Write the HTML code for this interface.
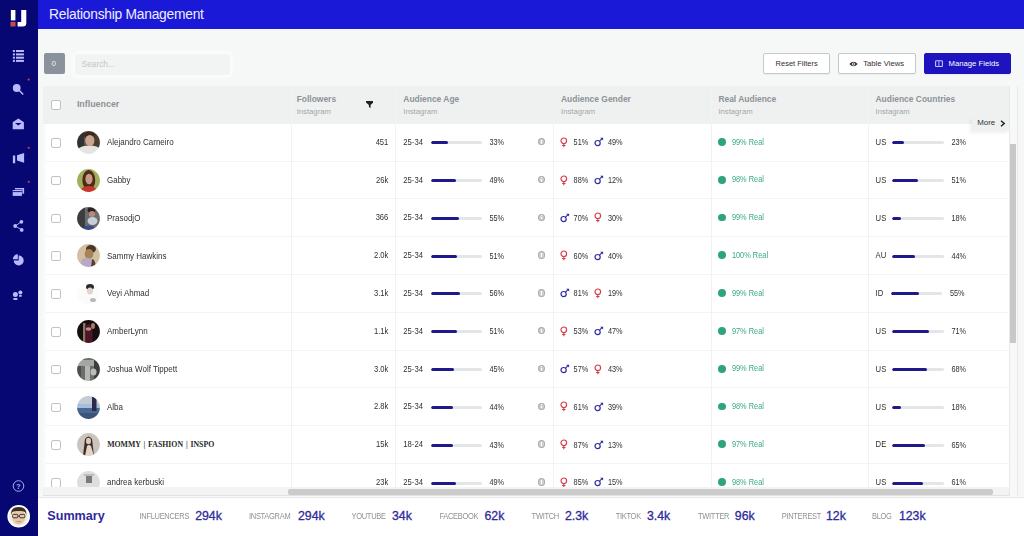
<!DOCTYPE html>
<html><head><meta charset="utf-8">
<style>
*{margin:0;padding:0;box-sizing:border-box}
html,body{width:1024px;height:536px;overflow:hidden;background:#f6f7f7;font-family:"Liberation Sans",sans-serif;color:#303030}
.t{position:absolute;line-height:1;white-space:nowrap}
.ic{position:absolute;display:block}
#sb{position:absolute;left:0;top:0;width:37.5px;height:536px;background:#070774}
#hd{position:absolute;left:37.5px;top:0;right:0;height:29.4px;background:#1b19d8}
#zero{position:absolute;left:43.5px;top:53.3px;width:21px;height:20.5px;background:#8a939b;border-radius:2px}
#search{position:absolute;left:75px;top:53.5px;width:155px;height:21.5px;background:#f2f3f3;border-radius:3px;box-shadow:0 0 3px 3px #fbfcfc;filter:blur(0.7px)}
.btn{position:absolute;top:53.3px;height:20.8px;border:1px solid #c5c9cd;background:#fff;border-radius:2px;box-shadow:0 1px 1px rgba(0,0,0,0.05)}
.btn.p{background:#1d14c0;border-color:#1d14c0}
#th{position:absolute;left:43px;top:86px;width:965.5px;height:38px;background:#eff1f1}
#tb{position:absolute;left:43px;top:124px;width:965.5px;height:363px;overflow:hidden;background:linear-gradient(90deg,#f7f8f8,#fff 4px)}
#tbi{position:absolute;left:-43px;top:-124px;width:1024px;height:536px}
.hl{position:absolute;left:46px;width:962.5px;height:1px;background:#f2f3f3}
.vl{position:absolute;width:1px;background:#f1f2f3}
.cb{position:absolute;width:9.8px;height:9.6px;border:1px solid #bfc3c7;border-radius:2px;background:#fff}
.bar{position:absolute;width:51.5px;height:3px;background:#e4e5e6;border-radius:1.5px;overflow:hidden}
.bar i{display:block;height:3px;background:#1e1a8c;border-radius:1.5px}
.info{position:absolute;width:7.4px;height:7.6px;border-radius:50%;background:#cfd0d1;border:1.3px solid #a9abad;color:transparent;font-size:0}
.info:after{content:'';position:absolute;left:1.9px;top:2.2px;width:1.1px;height:2.8px;background:#fff}
.info:before{content:'';position:absolute;left:1.9px;top:0.7px;width:1.1px;height:1px;background:#fff}
.dot{position:absolute;width:7.8px;height:7.8px;border-radius:50%;background:#2fa47a}
#vs{position:absolute;left:1008.5px;top:86px;width:9px;height:410px;background:#f8f8f8;border-left:1px solid #e9e9e9;border-right:1px solid #e9e9e9}
#vst{position:absolute;left:1010.4px;top:144px;width:6px;height:199px;background:#c8c8c8}
#hsb{position:absolute;left:43px;top:487px;width:965.5px;height:9px;background:#f3f3f3;border-bottom:1px solid #e2e2e2}
#hst{position:absolute;left:288px;top:488.8px;width:705px;height:6.4px;background:#cbcbcb;border-radius:2px}
#more{position:absolute;left:972px;top:116.5px;width:36.5px;height:14px;background:#eff1f1;box-shadow:-2px 2px 3px rgba(0,0,0,0.06)}
#sum{position:absolute;left:37.5px;top:496.5px;right:0;bottom:0;background:#fff;border-top:1px solid #e6e8ea}
</style></head><body>
<div id="sb"></div>
<svg class="ic" style="left:0;top:0" width="38" height="536" viewBox="0 0 38 536">
<rect x="10.9" y="10" width="4.5" height="10.4" fill="#fff"/>
<rect x="10.5" y="21.9" width="5" height="4.6" fill="#cc4a4a"/>
<path d="M21.2 10H26.3V23Q26.3 26.5 22.8 26.5H17.6V22H21.2Z" fill="#fff"/>
<g fill="#b9b9ff">
<rect x="12.9" y="50" width="2" height="2"/><rect x="16" y="50" width="7.9" height="2"/>
<rect x="12.9" y="53.4" width="2" height="2"/><rect x="16" y="53.4" width="7.9" height="2"/>
<rect x="12.9" y="56.7" width="2" height="2"/><rect x="16" y="56.7" width="7.9" height="2"/>
<rect x="12.9" y="59.9" width="2" height="2"/><rect x="16" y="59.9" width="7.9" height="2"/>
<circle cx="16.7" cy="88" r="3.9"/>
<path d="M19 90.3L23.2 94.6" stroke="#b9b9ff" stroke-width="1.5"/>
<path d="M12.7 122.2L18.3 118.5L23.9 122.2V129.2H12.7Z"/>
<path d="M15 123L18.3 125.6L21.6 123Z" fill="#070774"/>
<rect x="12.9" y="155.5" width="2.3" height="7.8"/>
<path d="M17 155.2L24.1 153V162.8L17 160.6Z"/>
<rect x="15" y="188" width="9.1" height="5.7"/>
<rect x="12.1" y="189.4" width="10.3" height="6.7" fill="#070774"/>
<rect x="12.7" y="190" width="9.2" height="5.9"/>
<rect x="12.7" y="191.2" width="9.2" height="0.9" fill="#070774"/>
<circle cx="21.4" cy="221.8" r="1.9"/><circle cx="15.2" cy="226" r="1.9"/><circle cx="21.7" cy="229.9" r="1.9"/>
<path d="M15.2 226L21.4 221.8M15.2 226L21.7 229.9" stroke="#b9b9ff" stroke-width="0.9"/>
<path d="M18.7 255.5A5 5 0 1 1 13.7 260.5H18.7Z"/>
<path d="M17.8 254.3V259.2H12.9A4.9 4.9 0 0 1 17.8 254.3Z"/>
<circle cx="15.4" cy="294.4" r="2.5"/><rect x="13.2" y="298" width="4.4" height="1.9" rx="0.8"/>
<circle cx="20.4" cy="292.4" r="2"/><rect x="19" y="295.1" width="2.8" height="1.7" rx="0.6"/>
</g>
<g fill="#c83a5a"><circle cx="28.7" cy="79.6" r="1.1"/><circle cx="28.8" cy="147.8" r="1.1"/><circle cx="28.8" cy="181.8" r="1.1"/></g>
<circle cx="18.5" cy="486" r="5.3" fill="none" stroke="#b9b9ff" stroke-width="0.9"/>
<text x="18.5" y="488.6" font-size="7" font-family="Liberation Sans" font-weight="bold" text-anchor="middle" fill="#b9b9ff">?</text>
<circle cx="18.7" cy="516.2" r="11.3" fill="#fff"/>
<circle cx="18.7" cy="516.2" r="9.7" fill="#f2ebe4"/>
<ellipse cx="18.7" cy="517" rx="6.6" ry="7.6" fill="#e6c9ac"/>
<path d="M11.2 515Q10.5 507 18.7 507Q27 507 26.2 515L25 512Q22 510.5 18.7 511Q15 510.5 12.4 512Z" fill="#3e2e22"/>
<rect x="12.6" y="514.4" width="5.2" height="3.4" rx="1" fill="none" stroke="#2e221a" stroke-width="0.9"/>
<rect x="19.6" y="514.4" width="5.2" height="3.4" rx="1" fill="none" stroke="#2e221a" stroke-width="0.9"/>
<path d="M17.8 516H19.6" stroke="#2e221a" stroke-width="0.7"/>
<path d="M16.5 521.2Q18.7 522.4 20.9 521.2" stroke="#a0705a" stroke-width="0.7" fill="none"/>
</svg>
<div id="hd"></div>
<div class="t" style="left:49.10px;top:7.92px;font-size:13.8px;color:#eeeeff;letter-spacing:-0.25px">Relationship Management</div>
<div id="zero"></div>
<div class="t" style="left:51.50px;top:60.03px;font-size:8px;color:#eef0f2">0</div>
<div id="search"></div>
<div class="t" style="left:81.70px;top:59.87px;font-size:8.3px;color:#c3c6c8">Search...</div>
<div class="btn" style="left:763.2px;width:66.8px"></div>
<div class="t" style="left:775.60px;top:60.05px;font-size:7.5px;">Reset Filters</div>
<div class="btn" style="left:837.8px;width:78.2px"></div>
<svg class="ic" style="left:848.5px;top:61px" width="9" height="6" viewBox="0 0 9 6"><path d="M0.3 3Q4.5 -1.5 8.7 3Q4.5 7.5 0.3 3Z" fill="#333"/><circle cx="4.5" cy="3" r="1.5" fill="#fff"/><circle cx="4.5" cy="3" r="0.8" fill="#333"/></svg>
<div class="t" style="left:863.20px;top:59.88px;font-size:7.7px;">Table Views</div>
<div class="btn p" style="left:923.5px;width:87.7px"></div>
<svg class="ic" style="left:935px;top:59.8px" width="8" height="7.2" viewBox="0 0 8 7.2"><rect x="0.6" y="0.7" width="6.8" height="5.9" rx="0.9" fill="none" stroke="#c4c4ff" stroke-width="1.1"/><path d="M3.9 1V6.4" stroke="#c4c4ff" stroke-width="0.9"/></svg>
<div class="t" style="left:948.60px;top:59.88px;font-size:7.7px;color:#fff">Manage Fields</div>
<div id="th"></div>
<div class="cb" style="left:51.2px;top:100px"></div>
<div class="t" style="left:76.90px;top:100.27px;font-size:8.9px;font-weight:bold;color:#8d9297">Influencer</div>
<div class="t" style="left:296.70px;top:94.95px;font-size:8.45px;font-weight:bold;color:#8d9297">Followers</div>
<div class="t" style="left:296.70px;top:107.98px;font-size:7.7px;color:#a2a6aa">Instagram</div>
<svg class="ic" style="left:365.8px;top:100.8px" width="7.5" height="7" viewBox="0 0 7.5 7"><path d="M0 0H7.5V1.4L4.6 4V7L2.9 6.1V4L0 1.4Z" fill="#222"/></svg>
<div class="t" style="left:403.30px;top:94.95px;font-size:8.45px;font-weight:bold;color:#8d9297">Audience Age</div>
<div class="t" style="left:403.30px;top:107.98px;font-size:7.7px;color:#a2a6aa">Instagram</div>
<div class="t" style="left:561.00px;top:94.95px;font-size:8.45px;font-weight:bold;color:#8d9297">Audience Gender</div>
<div class="t" style="left:561.00px;top:107.98px;font-size:7.7px;color:#a2a6aa">Instagram</div>
<div class="t" style="left:718.40px;top:94.95px;font-size:8.45px;font-weight:bold;color:#8d9297">Real Audience</div>
<div class="t" style="left:718.40px;top:107.98px;font-size:7.7px;color:#a2a6aa">Instagram</div>
<div class="t" style="left:875.50px;top:94.95px;font-size:8.45px;font-weight:bold;color:#8d9297">Audience Countries</div>
<div class="t" style="left:875.50px;top:107.98px;font-size:7.7px;color:#a2a6aa">Instagram</div>
<div class="vl" style="left:290.5px;top:86px;height:401px"></div>
<div class="vl" style="left:394.5px;top:86px;height:401px"></div>
<div class="vl" style="left:553px;top:86px;height:401px"></div>
<div class="vl" style="left:711px;top:86px;height:401px"></div>
<div class="vl" style="left:867.5px;top:86px;height:401px"></div>
<div id="tb"><div id="tbi">
<div class="cb" style="left:51px;top:138.00px"></div><svg class="ic" style="left:76.60px;top:131.00px" width="23" height="23" viewBox="0 0 23 23"><defs><clipPath id="c0"><circle cx="11.5" cy="11.5" r="11.4"/></clipPath><filter id="f0" x="-10%" y="-10%" width="120%" height="120%"><feGaussianBlur stdDeviation="0.7"/></filter></defs><g clip-path="url(#c0)"><g filter="url(#f0)"><rect width="23" height="23" fill="#5c524a"/><rect x="0" y="0" width="7" height="23" fill="#2f3030"/><rect x="17" y="0" width="6" height="16" fill="#4a3c32"/><ellipse cx="12.5" cy="4" rx="6" ry="3.5" fill="#3a2c24"/><ellipse cx="12.8" cy="9.5" rx="4.6" ry="5.6" fill="#c9a48e"/><path d="M0 23L2 17Q7 14 12.5 15Q19 14 23 18V23Z" fill="#e6e4e0"/></g></g></svg><div class="t" style="left:107.00px;top:139.13px;font-size:8px;transform:scaleY(1.1);transform-origin:0 6.77px;">Alejandro Carneiro</div><div class="t" style="left:328.30px;width:60px;text-align:right;top:138.87px;font-size:7.6px;transform:scaleY(1.14);transform-origin:0 6.43px;">451</div><div class="t" style="left:403.30px;top:138.78px;font-size:7.7px;transform:scaleY(1.14);transform-origin:0 6.52px;">25-34</div><div class="bar" style="left:430.7px;top:141px"><i style="width:33%"></i></div><div class="t" style="left:489.40px;top:139.12px;font-size:7.3px;transform:scaleY(1.18);transform-origin:0 6.18px;">33%</div><div class="info" style="left:537.8px;top:137.90px">i</div><svg class="ic" style="left:560.2px;top:136.80px" width="9" height="12" viewBox="0 0 9 12"><circle cx="3.8" cy="3.8" r="2.8" fill="none" stroke="#d2434d" stroke-width="1.2"/><path d="M3.8 6.6V10.2M2.1 8.5H5.5" stroke="#d2434d" stroke-width="1.1" fill="none"/></svg><div class="t" style="left:573.60px;top:139.12px;font-size:7.3px;transform:scaleY(1.18);transform-origin:0 6.18px;">51%</div><svg class="ic" style="left:593.6px;top:136.20px" width="11" height="11" viewBox="0 0 11 11"><circle cx="3.6" cy="7.1" r="2.6" fill="none" stroke="#2e2aa0" stroke-width="1.2"/><path d="M5.5 5.2L8 2.7" stroke="#2e2aa0" stroke-width="1.1" fill="none"/><path d="M6.2 1.7H9.1V4.6Z" fill="#2e2aa0"/></svg><div class="t" style="left:608.00px;top:139.12px;font-size:7.3px;transform:scaleY(1.18);transform-origin:0 6.18px;">49%</div><div class="dot" style="left:718.1px;top:138.00px"></div><div class="t" style="left:731.90px;top:138.64px;font-size:7.4px;transform:scaleY(1.12);transform-origin:0 6.26px;color:#3aaa80">99% Real</div><div class="t" style="left:875.60px;top:139.08px;font-size:7.7px;transform:scaleY(1.12);transform-origin:0 6.52px;">US</div><div class="bar" style="left:892px;top:141px"><i style="width:23%"></i></div><div class="t" style="left:951.50px;top:139.12px;font-size:7.3px;transform:scaleY(1.18);transform-origin:0 6.18px;">23%</div><div class="hl" style="top:160.60px"></div><div class="cb" style="left:51px;top:175.80px"></div><svg class="ic" style="left:76.60px;top:168.80px" width="23" height="23" viewBox="0 0 23 23"><defs><clipPath id="c1"><circle cx="11.5" cy="11.5" r="11.4"/></clipPath><filter id="f1" x="-10%" y="-10%" width="120%" height="120%"><feGaussianBlur stdDeviation="0.7"/></filter></defs><g clip-path="url(#c1)"><g filter="url(#f1)"><rect width="23" height="23" fill="#a4ae5a"/><ellipse cx="11.8" cy="11" rx="6.5" ry="10" fill="#4d2c1e"/><ellipse cx="12" cy="10" rx="3.6" ry="5.2" fill="#c99a84"/><path d="M2 23Q5 17 12 17Q19 17 21 23Z" fill="#c8382a"/></g></g></svg><div class="t" style="left:107.00px;top:176.93px;font-size:8px;transform:scaleY(1.1);transform-origin:0 6.77px;">Gabby</div><div class="t" style="left:328.30px;width:60px;text-align:right;top:176.67px;font-size:7.6px;transform:scaleY(1.14);transform-origin:0 6.43px;">26k</div><div class="t" style="left:403.30px;top:176.58px;font-size:7.7px;transform:scaleY(1.14);transform-origin:0 6.52px;">25-34</div><div class="bar" style="left:430.7px;top:179px"><i style="width:49%"></i></div><div class="t" style="left:489.40px;top:176.92px;font-size:7.3px;transform:scaleY(1.18);transform-origin:0 6.18px;">49%</div><div class="info" style="left:537.8px;top:175.70px">i</div><svg class="ic" style="left:560.2px;top:174.60px" width="9" height="12" viewBox="0 0 9 12"><circle cx="3.8" cy="3.8" r="2.8" fill="none" stroke="#d2434d" stroke-width="1.2"/><path d="M3.8 6.6V10.2M2.1 8.5H5.5" stroke="#d2434d" stroke-width="1.1" fill="none"/></svg><div class="t" style="left:573.60px;top:176.92px;font-size:7.3px;transform:scaleY(1.18);transform-origin:0 6.18px;">88%</div><svg class="ic" style="left:593.6px;top:174.00px" width="11" height="11" viewBox="0 0 11 11"><circle cx="3.6" cy="7.1" r="2.6" fill="none" stroke="#2e2aa0" stroke-width="1.2"/><path d="M5.5 5.2L8 2.7" stroke="#2e2aa0" stroke-width="1.1" fill="none"/><path d="M6.2 1.7H9.1V4.6Z" fill="#2e2aa0"/></svg><div class="t" style="left:608.00px;top:176.92px;font-size:7.3px;transform:scaleY(1.18);transform-origin:0 6.18px;">12%</div><div class="dot" style="left:718.1px;top:175.80px"></div><div class="t" style="left:731.90px;top:176.44px;font-size:7.4px;transform:scaleY(1.12);transform-origin:0 6.26px;color:#3aaa80">98% Real</div><div class="t" style="left:875.60px;top:176.88px;font-size:7.7px;transform:scaleY(1.12);transform-origin:0 6.52px;">US</div><div class="bar" style="left:892px;top:179px"><i style="width:51%"></i></div><div class="t" style="left:951.50px;top:176.92px;font-size:7.3px;transform:scaleY(1.18);transform-origin:0 6.18px;">51%</div><div class="hl" style="top:198.40px"></div><div class="cb" style="left:51px;top:213.60px"></div><svg class="ic" style="left:76.60px;top:206.60px" width="23" height="23" viewBox="0 0 23 23"><defs><clipPath id="c2"><circle cx="11.5" cy="11.5" r="11.4"/></clipPath><filter id="f2" x="-10%" y="-10%" width="120%" height="120%"><feGaussianBlur stdDeviation="0.7"/></filter></defs><g clip-path="url(#c2)"><g filter="url(#f2)"><rect width="23" height="23" fill="#6b6d70"/><rect x="0" y="0" width="8" height="23" fill="#3c3d40"/><ellipse cx="14.5" cy="3" rx="4" ry="3" fill="#2a2420"/><ellipse cx="15" cy="7" rx="3" ry="3" fill="#b88a7a"/><ellipse cx="15.5" cy="14" rx="5" ry="4" fill="#c6ced8"/><ellipse cx="12" cy="22" rx="6" ry="3.5" fill="#3c4a8a"/></g></g></svg><div class="t" style="left:107.00px;top:214.73px;font-size:8px;transform:scaleY(1.1);transform-origin:0 6.77px;">PrasodjO</div><div class="t" style="left:328.30px;width:60px;text-align:right;top:214.47px;font-size:7.6px;transform:scaleY(1.14);transform-origin:0 6.43px;">366</div><div class="t" style="left:403.30px;top:214.38px;font-size:7.7px;transform:scaleY(1.14);transform-origin:0 6.52px;">25-34</div><div class="bar" style="left:430.7px;top:217px"><i style="width:55%"></i></div><div class="t" style="left:489.40px;top:214.72px;font-size:7.3px;transform:scaleY(1.18);transform-origin:0 6.18px;">55%</div><div class="info" style="left:537.8px;top:213.50px">i</div><svg class="ic" style="left:560.2px;top:211.80px" width="11" height="11" viewBox="0 0 11 11"><circle cx="3.6" cy="7.1" r="2.6" fill="none" stroke="#2e2aa0" stroke-width="1.2"/><path d="M5.5 5.2L8 2.7" stroke="#2e2aa0" stroke-width="1.1" fill="none"/><path d="M6.2 1.7H9.1V4.6Z" fill="#2e2aa0"/></svg><div class="t" style="left:573.60px;top:214.72px;font-size:7.3px;transform:scaleY(1.18);transform-origin:0 6.18px;">70%</div><svg class="ic" style="left:593.6px;top:212.40px" width="9" height="12" viewBox="0 0 9 12"><circle cx="3.8" cy="3.8" r="2.8" fill="none" stroke="#d2434d" stroke-width="1.2"/><path d="M3.8 6.6V10.2M2.1 8.5H5.5" stroke="#d2434d" stroke-width="1.1" fill="none"/></svg><div class="t" style="left:608.00px;top:214.72px;font-size:7.3px;transform:scaleY(1.18);transform-origin:0 6.18px;">30%</div><div class="dot" style="left:718.1px;top:213.60px"></div><div class="t" style="left:731.90px;top:214.24px;font-size:7.4px;transform:scaleY(1.12);transform-origin:0 6.26px;color:#3aaa80">99% Real</div><div class="t" style="left:875.60px;top:214.68px;font-size:7.7px;transform:scaleY(1.12);transform-origin:0 6.52px;">US</div><div class="bar" style="left:892px;top:217px"><i style="width:18%"></i></div><div class="t" style="left:951.50px;top:214.72px;font-size:7.3px;transform:scaleY(1.18);transform-origin:0 6.18px;">18%</div><div class="hl" style="top:236.20px"></div><div class="cb" style="left:51px;top:251.40px"></div><svg class="ic" style="left:76.60px;top:244.40px" width="23" height="23" viewBox="0 0 23 23"><defs><clipPath id="c3"><circle cx="11.5" cy="11.5" r="11.4"/></clipPath><filter id="f3" x="-10%" y="-10%" width="120%" height="120%"><feGaussianBlur stdDeviation="0.7"/></filter></defs><g clip-path="url(#c3)"><g filter="url(#f3)"><rect width="23" height="23" fill="#d2c0a0"/><ellipse cx="14" cy="5" rx="5" ry="4" fill="#4a3826"/><ellipse cx="12" cy="10" rx="4.3" ry="5" fill="#a88258"/><path d="M3 23L5 15Q9 13 15 15L14 23Z" fill="#b8aac6"/><path d="M14 23L15 15Q18 15 19 23Z" fill="#5a3e30"/></g></g></svg><div class="t" style="left:107.00px;top:252.53px;font-size:8px;transform:scaleY(1.1);transform-origin:0 6.77px;">Sammy Hawkins</div><div class="t" style="left:328.30px;width:60px;text-align:right;top:252.27px;font-size:7.6px;transform:scaleY(1.14);transform-origin:0 6.43px;">2.0k</div><div class="t" style="left:403.30px;top:252.18px;font-size:7.7px;transform:scaleY(1.14);transform-origin:0 6.52px;">25-34</div><div class="bar" style="left:430.7px;top:255px"><i style="width:51%"></i></div><div class="t" style="left:489.40px;top:252.52px;font-size:7.3px;transform:scaleY(1.18);transform-origin:0 6.18px;">51%</div><div class="info" style="left:537.8px;top:251.30px">i</div><svg class="ic" style="left:560.2px;top:250.20px" width="9" height="12" viewBox="0 0 9 12"><circle cx="3.8" cy="3.8" r="2.8" fill="none" stroke="#d2434d" stroke-width="1.2"/><path d="M3.8 6.6V10.2M2.1 8.5H5.5" stroke="#d2434d" stroke-width="1.1" fill="none"/></svg><div class="t" style="left:573.60px;top:252.52px;font-size:7.3px;transform:scaleY(1.18);transform-origin:0 6.18px;">60%</div><svg class="ic" style="left:593.6px;top:249.60px" width="11" height="11" viewBox="0 0 11 11"><circle cx="3.6" cy="7.1" r="2.6" fill="none" stroke="#2e2aa0" stroke-width="1.2"/><path d="M5.5 5.2L8 2.7" stroke="#2e2aa0" stroke-width="1.1" fill="none"/><path d="M6.2 1.7H9.1V4.6Z" fill="#2e2aa0"/></svg><div class="t" style="left:608.00px;top:252.52px;font-size:7.3px;transform:scaleY(1.18);transform-origin:0 6.18px;">40%</div><div class="dot" style="left:718.1px;top:251.40px"></div><div class="t" style="left:731.90px;top:252.04px;font-size:7.4px;transform:scaleY(1.12);transform-origin:0 6.26px;color:#3aaa80">100% Real</div><div class="t" style="left:875.60px;top:252.48px;font-size:7.7px;transform:scaleY(1.12);transform-origin:0 6.52px;">AU</div><div class="bar" style="left:892px;top:255px"><i style="width:44%"></i></div><div class="t" style="left:951.50px;top:252.52px;font-size:7.3px;transform:scaleY(1.18);transform-origin:0 6.18px;">44%</div><div class="hl" style="top:274.00px"></div><div class="cb" style="left:51px;top:289.20px"></div><svg class="ic" style="left:76.60px;top:282.20px" width="23" height="23" viewBox="0 0 23 23"><defs><clipPath id="c4"><circle cx="11.5" cy="11.5" r="11.4"/></clipPath><filter id="f4" x="-10%" y="-10%" width="120%" height="120%"><feGaussianBlur stdDeviation="0.7"/></filter></defs><g clip-path="url(#c4)"><g filter="url(#f4)"><rect width="23" height="23" fill="#fbfbfb"/><ellipse cx="13" cy="5" rx="4" ry="3" fill="#2c2c2c"/><ellipse cx="13" cy="9" rx="3" ry="3.6" fill="#e2d4cc"/><ellipse cx="16" cy="18" rx="3" ry="2" fill="#b8b8b8"/></g></g></svg><div class="t" style="left:107.00px;top:290.33px;font-size:8px;transform:scaleY(1.1);transform-origin:0 6.77px;">Veyi Ahmad</div><div class="t" style="left:328.30px;width:60px;text-align:right;top:290.07px;font-size:7.6px;transform:scaleY(1.14);transform-origin:0 6.43px;">3.1k</div><div class="t" style="left:403.30px;top:289.98px;font-size:7.7px;transform:scaleY(1.14);transform-origin:0 6.52px;">25-34</div><div class="bar" style="left:430.7px;top:292px"><i style="width:56%"></i></div><div class="t" style="left:489.40px;top:290.32px;font-size:7.3px;transform:scaleY(1.18);transform-origin:0 6.18px;">56%</div><div class="info" style="left:537.8px;top:289.10px">i</div><svg class="ic" style="left:560.2px;top:287.40px" width="11" height="11" viewBox="0 0 11 11"><circle cx="3.6" cy="7.1" r="2.6" fill="none" stroke="#2e2aa0" stroke-width="1.2"/><path d="M5.5 5.2L8 2.7" stroke="#2e2aa0" stroke-width="1.1" fill="none"/><path d="M6.2 1.7H9.1V4.6Z" fill="#2e2aa0"/></svg><div class="t" style="left:573.60px;top:290.32px;font-size:7.3px;transform:scaleY(1.18);transform-origin:0 6.18px;">81%</div><svg class="ic" style="left:593.6px;top:288.00px" width="9" height="12" viewBox="0 0 9 12"><circle cx="3.8" cy="3.8" r="2.8" fill="none" stroke="#d2434d" stroke-width="1.2"/><path d="M3.8 6.6V10.2M2.1 8.5H5.5" stroke="#d2434d" stroke-width="1.1" fill="none"/></svg><div class="t" style="left:608.00px;top:290.32px;font-size:7.3px;transform:scaleY(1.18);transform-origin:0 6.18px;">19%</div><div class="dot" style="left:718.1px;top:289.20px"></div><div class="t" style="left:731.90px;top:289.84px;font-size:7.4px;transform:scaleY(1.12);transform-origin:0 6.26px;color:#3aaa80">99% Real</div><div class="t" style="left:875.60px;top:290.28px;font-size:7.7px;transform:scaleY(1.12);transform-origin:0 6.52px;">ID</div><div class="bar" style="left:890.5px;top:292px"><i style="width:55%"></i></div><div class="t" style="left:950.00px;top:290.32px;font-size:7.3px;transform:scaleY(1.18);transform-origin:0 6.18px;">55%</div><div class="hl" style="top:311.80px"></div><div class="cb" style="left:51px;top:327.00px"></div><svg class="ic" style="left:76.60px;top:320.00px" width="23" height="23" viewBox="0 0 23 23"><defs><clipPath id="c5"><circle cx="11.5" cy="11.5" r="11.4"/></clipPath><filter id="f5" x="-10%" y="-10%" width="120%" height="120%"><feGaussianBlur stdDeviation="0.7"/></filter></defs><g clip-path="url(#c5)"><g filter="url(#f5)"><rect width="23" height="23" fill="#120a0e"/><rect x="6" y="3" width="2.5" height="20" fill="#8a7462"/><path d="M8.5 23V6Q12 2 15.5 6V23Z" fill="#4e1826"/><ellipse cx="11.5" cy="9" rx="2.8" ry="1.8" fill="#c48a8e"/><ellipse cx="16" cy="6" rx="2" ry="3" fill="#a08068"/></g></g></svg><div class="t" style="left:107.00px;top:328.13px;font-size:8px;transform:scaleY(1.1);transform-origin:0 6.77px;">AmberLynn</div><div class="t" style="left:328.30px;width:60px;text-align:right;top:327.87px;font-size:7.6px;transform:scaleY(1.14);transform-origin:0 6.43px;">1.1k</div><div class="t" style="left:403.30px;top:327.78px;font-size:7.7px;transform:scaleY(1.14);transform-origin:0 6.52px;">25-34</div><div class="bar" style="left:430.7px;top:330px"><i style="width:51%"></i></div><div class="t" style="left:489.40px;top:328.12px;font-size:7.3px;transform:scaleY(1.18);transform-origin:0 6.18px;">51%</div><div class="info" style="left:537.8px;top:326.90px">i</div><svg class="ic" style="left:560.2px;top:325.80px" width="9" height="12" viewBox="0 0 9 12"><circle cx="3.8" cy="3.8" r="2.8" fill="none" stroke="#d2434d" stroke-width="1.2"/><path d="M3.8 6.6V10.2M2.1 8.5H5.5" stroke="#d2434d" stroke-width="1.1" fill="none"/></svg><div class="t" style="left:573.60px;top:328.12px;font-size:7.3px;transform:scaleY(1.18);transform-origin:0 6.18px;">53%</div><svg class="ic" style="left:593.6px;top:325.20px" width="11" height="11" viewBox="0 0 11 11"><circle cx="3.6" cy="7.1" r="2.6" fill="none" stroke="#2e2aa0" stroke-width="1.2"/><path d="M5.5 5.2L8 2.7" stroke="#2e2aa0" stroke-width="1.1" fill="none"/><path d="M6.2 1.7H9.1V4.6Z" fill="#2e2aa0"/></svg><div class="t" style="left:608.00px;top:328.12px;font-size:7.3px;transform:scaleY(1.18);transform-origin:0 6.18px;">47%</div><div class="dot" style="left:718.1px;top:327.00px"></div><div class="t" style="left:731.90px;top:327.64px;font-size:7.4px;transform:scaleY(1.12);transform-origin:0 6.26px;color:#3aaa80">97% Real</div><div class="t" style="left:875.60px;top:328.08px;font-size:7.7px;transform:scaleY(1.12);transform-origin:0 6.52px;">US</div><div class="bar" style="left:892px;top:330px"><i style="width:71%"></i></div><div class="t" style="left:951.50px;top:328.12px;font-size:7.3px;transform:scaleY(1.18);transform-origin:0 6.18px;">71%</div><div class="hl" style="top:349.60px"></div><div class="cb" style="left:51px;top:364.80px"></div><svg class="ic" style="left:76.60px;top:357.80px" width="23" height="23" viewBox="0 0 23 23"><defs><clipPath id="c6"><circle cx="11.5" cy="11.5" r="11.4"/></clipPath><filter id="f6" x="-10%" y="-10%" width="120%" height="120%"><feGaussianBlur stdDeviation="0.7"/></filter></defs><g clip-path="url(#c6)"><g filter="url(#f6)"><rect width="23" height="23" fill="#6c6e6c"/><rect x="0" y="2" width="17" height="6" fill="#a4a6a4"/><rect x="8" y="8" width="5" height="15" fill="#b4b6b4"/><rect x="0" y="8" width="4" height="15" fill="#4e504e"/><rect x="17" y="0" width="6" height="23" fill="#3c3d3c"/><ellipse cx="16.5" cy="14" rx="3" ry="3.5" fill="#bcbcbc"/></g></g></svg><div class="t" style="left:107.00px;top:365.93px;font-size:8px;transform:scaleY(1.1);transform-origin:0 6.77px;">Joshua Wolf Tippett</div><div class="t" style="left:328.30px;width:60px;text-align:right;top:365.67px;font-size:7.6px;transform:scaleY(1.14);transform-origin:0 6.43px;">3.0k</div><div class="t" style="left:403.30px;top:365.58px;font-size:7.7px;transform:scaleY(1.14);transform-origin:0 6.52px;">25-34</div><div class="bar" style="left:430.7px;top:368px"><i style="width:45%"></i></div><div class="t" style="left:489.40px;top:365.92px;font-size:7.3px;transform:scaleY(1.18);transform-origin:0 6.18px;">45%</div><div class="info" style="left:537.8px;top:364.70px">i</div><svg class="ic" style="left:560.2px;top:363.00px" width="11" height="11" viewBox="0 0 11 11"><circle cx="3.6" cy="7.1" r="2.6" fill="none" stroke="#2e2aa0" stroke-width="1.2"/><path d="M5.5 5.2L8 2.7" stroke="#2e2aa0" stroke-width="1.1" fill="none"/><path d="M6.2 1.7H9.1V4.6Z" fill="#2e2aa0"/></svg><div class="t" style="left:573.60px;top:365.92px;font-size:7.3px;transform:scaleY(1.18);transform-origin:0 6.18px;">57%</div><svg class="ic" style="left:593.6px;top:363.60px" width="9" height="12" viewBox="0 0 9 12"><circle cx="3.8" cy="3.8" r="2.8" fill="none" stroke="#d2434d" stroke-width="1.2"/><path d="M3.8 6.6V10.2M2.1 8.5H5.5" stroke="#d2434d" stroke-width="1.1" fill="none"/></svg><div class="t" style="left:608.00px;top:365.92px;font-size:7.3px;transform:scaleY(1.18);transform-origin:0 6.18px;">43%</div><div class="dot" style="left:718.1px;top:364.80px"></div><div class="t" style="left:731.90px;top:365.44px;font-size:7.4px;transform:scaleY(1.12);transform-origin:0 6.26px;color:#3aaa80">99% Real</div><div class="t" style="left:875.60px;top:365.88px;font-size:7.7px;transform:scaleY(1.12);transform-origin:0 6.52px;">US</div><div class="bar" style="left:892px;top:368px"><i style="width:68%"></i></div><div class="t" style="left:951.50px;top:365.92px;font-size:7.3px;transform:scaleY(1.18);transform-origin:0 6.18px;">68%</div><div class="hl" style="top:387.40px"></div><div class="cb" style="left:51px;top:402.60px"></div><svg class="ic" style="left:76.60px;top:395.60px" width="23" height="23" viewBox="0 0 23 23"><defs><clipPath id="c7"><circle cx="11.5" cy="11.5" r="11.4"/></clipPath><filter id="f7" x="-10%" y="-10%" width="120%" height="120%"><feGaussianBlur stdDeviation="0.7"/></filter></defs><g clip-path="url(#c7)"><g filter="url(#f7)"><rect width="23" height="23" fill="#4a6894"/><rect x="0" y="0" width="23" height="8" fill="#c6cad2"/><rect x="0" y="8" width="23" height="4" fill="#a6bedc"/><rect x="15" y="1" width="4.5" height="14" fill="#2c2a4c"/><rect x="0" y="17" width="23" height="6" fill="#3a5478"/></g></g></svg><div class="t" style="left:107.00px;top:403.73px;font-size:8px;transform:scaleY(1.1);transform-origin:0 6.77px;">Alba</div><div class="t" style="left:328.30px;width:60px;text-align:right;top:403.47px;font-size:7.6px;transform:scaleY(1.14);transform-origin:0 6.43px;">2.8k</div><div class="t" style="left:403.30px;top:403.38px;font-size:7.7px;transform:scaleY(1.14);transform-origin:0 6.52px;">25-34</div><div class="bar" style="left:430.7px;top:406px"><i style="width:44%"></i></div><div class="t" style="left:489.40px;top:403.72px;font-size:7.3px;transform:scaleY(1.18);transform-origin:0 6.18px;">44%</div><div class="info" style="left:537.8px;top:402.50px">i</div><svg class="ic" style="left:560.2px;top:401.40px" width="9" height="12" viewBox="0 0 9 12"><circle cx="3.8" cy="3.8" r="2.8" fill="none" stroke="#d2434d" stroke-width="1.2"/><path d="M3.8 6.6V10.2M2.1 8.5H5.5" stroke="#d2434d" stroke-width="1.1" fill="none"/></svg><div class="t" style="left:573.60px;top:403.72px;font-size:7.3px;transform:scaleY(1.18);transform-origin:0 6.18px;">61%</div><svg class="ic" style="left:593.6px;top:400.80px" width="11" height="11" viewBox="0 0 11 11"><circle cx="3.6" cy="7.1" r="2.6" fill="none" stroke="#2e2aa0" stroke-width="1.2"/><path d="M5.5 5.2L8 2.7" stroke="#2e2aa0" stroke-width="1.1" fill="none"/><path d="M6.2 1.7H9.1V4.6Z" fill="#2e2aa0"/></svg><div class="t" style="left:608.00px;top:403.72px;font-size:7.3px;transform:scaleY(1.18);transform-origin:0 6.18px;">39%</div><div class="dot" style="left:718.1px;top:402.60px"></div><div class="t" style="left:731.90px;top:403.24px;font-size:7.4px;transform:scaleY(1.12);transform-origin:0 6.26px;color:#3aaa80">98% Real</div><div class="t" style="left:875.60px;top:403.68px;font-size:7.7px;transform:scaleY(1.12);transform-origin:0 6.52px;">US</div><div class="bar" style="left:892px;top:406px"><i style="width:18%"></i></div><div class="t" style="left:951.50px;top:403.72px;font-size:7.3px;transform:scaleY(1.18);transform-origin:0 6.18px;">18%</div><div class="hl" style="top:425.20px"></div><div class="cb" style="left:51px;top:440.40px"></div><svg class="ic" style="left:76.60px;top:433.40px" width="23" height="23" viewBox="0 0 23 23"><defs><clipPath id="c8"><circle cx="11.5" cy="11.5" r="11.4"/></clipPath><filter id="f8" x="-10%" y="-10%" width="120%" height="120%"><feGaussianBlur stdDeviation="0.7"/></filter></defs><g clip-path="url(#c8)"><g filter="url(#f8)"><rect width="23" height="23" fill="#cbc4be"/><path d="M6 23L8 6Q11.5 1 15 6L17 23Z" fill="#3c2c26"/><ellipse cx="11.5" cy="8" rx="2.5" ry="3.2" fill="#dccab8"/><path d="M8 23L10 13Q12 11 14 13L17 23Z" fill="#e4d4c6"/></g></g></svg><div class="t" style="left:107.20px;top:441.17px;font-size:7.8px;font-family:'Liberation Serif',serif;font-weight:bold;color:#2a2a2a;word-spacing:0.9px">MOMMY | FASHION | INSPO</div><div class="t" style="left:328.30px;width:60px;text-align:right;top:441.27px;font-size:7.6px;transform:scaleY(1.14);transform-origin:0 6.43px;">15k</div><div class="t" style="left:403.30px;top:441.18px;font-size:7.7px;transform:scaleY(1.14);transform-origin:0 6.52px;">18-24</div><div class="bar" style="left:430.7px;top:444px"><i style="width:43%"></i></div><div class="t" style="left:489.40px;top:441.52px;font-size:7.3px;transform:scaleY(1.18);transform-origin:0 6.18px;">43%</div><div class="info" style="left:537.8px;top:440.30px">i</div><svg class="ic" style="left:560.2px;top:439.20px" width="9" height="12" viewBox="0 0 9 12"><circle cx="3.8" cy="3.8" r="2.8" fill="none" stroke="#d2434d" stroke-width="1.2"/><path d="M3.8 6.6V10.2M2.1 8.5H5.5" stroke="#d2434d" stroke-width="1.1" fill="none"/></svg><div class="t" style="left:573.60px;top:441.52px;font-size:7.3px;transform:scaleY(1.18);transform-origin:0 6.18px;">87%</div><svg class="ic" style="left:593.6px;top:438.60px" width="11" height="11" viewBox="0 0 11 11"><circle cx="3.6" cy="7.1" r="2.6" fill="none" stroke="#2e2aa0" stroke-width="1.2"/><path d="M5.5 5.2L8 2.7" stroke="#2e2aa0" stroke-width="1.1" fill="none"/><path d="M6.2 1.7H9.1V4.6Z" fill="#2e2aa0"/></svg><div class="t" style="left:608.00px;top:441.52px;font-size:7.3px;transform:scaleY(1.18);transform-origin:0 6.18px;">13%</div><div class="dot" style="left:718.1px;top:440.40px"></div><div class="t" style="left:731.90px;top:441.04px;font-size:7.4px;transform:scaleY(1.12);transform-origin:0 6.26px;color:#3aaa80">97% Real</div><div class="t" style="left:875.60px;top:441.48px;font-size:7.7px;transform:scaleY(1.12);transform-origin:0 6.52px;">DE</div><div class="bar" style="left:892px;top:444px"><i style="width:65%"></i></div><div class="t" style="left:951.50px;top:441.52px;font-size:7.3px;transform:scaleY(1.18);transform-origin:0 6.18px;">65%</div><div class="hl" style="top:463.00px"></div><div class="cb" style="left:51px;top:478.20px"></div><svg class="ic" style="left:76.60px;top:471.20px" width="23" height="23" viewBox="0 0 23 23"><defs><clipPath id="c9"><circle cx="11.5" cy="11.5" r="11.4"/></clipPath><filter id="f9" x="-10%" y="-10%" width="120%" height="120%"><feGaussianBlur stdDeviation="0.7"/></filter></defs><g clip-path="url(#c9)"><g filter="url(#f9)"><rect width="23" height="23" fill="#dedede"/><rect x="9" y="5" width="6" height="7" fill="#7a7a7a"/><rect x="7" y="3" width="10" height="2" fill="#bcbcbc"/></g></g></svg><div class="t" style="left:107.00px;top:479.33px;font-size:8px;transform:scaleY(1.1);transform-origin:0 6.77px;">andrea kerbuski</div><div class="t" style="left:328.30px;width:60px;text-align:right;top:479.07px;font-size:7.6px;transform:scaleY(1.14);transform-origin:0 6.43px;">23k</div><div class="t" style="left:403.30px;top:478.98px;font-size:7.7px;transform:scaleY(1.14);transform-origin:0 6.52px;">25-34</div><div class="bar" style="left:430.7px;top:482px"><i style="width:49%"></i></div><div class="t" style="left:489.40px;top:479.32px;font-size:7.3px;transform:scaleY(1.18);transform-origin:0 6.18px;">49%</div><div class="info" style="left:537.8px;top:478.10px">i</div><svg class="ic" style="left:560.2px;top:477.00px" width="9" height="12" viewBox="0 0 9 12"><circle cx="3.8" cy="3.8" r="2.8" fill="none" stroke="#d2434d" stroke-width="1.2"/><path d="M3.8 6.6V10.2M2.1 8.5H5.5" stroke="#d2434d" stroke-width="1.1" fill="none"/></svg><div class="t" style="left:573.60px;top:479.32px;font-size:7.3px;transform:scaleY(1.18);transform-origin:0 6.18px;">85%</div><svg class="ic" style="left:593.6px;top:476.40px" width="11" height="11" viewBox="0 0 11 11"><circle cx="3.6" cy="7.1" r="2.6" fill="none" stroke="#2e2aa0" stroke-width="1.2"/><path d="M5.5 5.2L8 2.7" stroke="#2e2aa0" stroke-width="1.1" fill="none"/><path d="M6.2 1.7H9.1V4.6Z" fill="#2e2aa0"/></svg><div class="t" style="left:608.00px;top:479.32px;font-size:7.3px;transform:scaleY(1.18);transform-origin:0 6.18px;">15%</div><div class="dot" style="left:718.1px;top:478.20px"></div><div class="t" style="left:731.90px;top:478.84px;font-size:7.4px;transform:scaleY(1.12);transform-origin:0 6.26px;color:#3aaa80">98% Real</div><div class="t" style="left:875.60px;top:479.28px;font-size:7.7px;transform:scaleY(1.12);transform-origin:0 6.52px;">US</div><div class="bar" style="left:892px;top:482px"><i style="width:61%"></i></div><div class="t" style="left:951.50px;top:479.32px;font-size:7.3px;transform:scaleY(1.18);transform-origin:0 6.18px;">61%</div>
<div class="vl" style="left:290.5px;top:124px;height:363px"></div>
<div class="vl" style="left:394.5px;top:124px;height:363px"></div>
<div class="vl" style="left:553px;top:124px;height:363px"></div>
<div class="vl" style="left:711px;top:124px;height:363px"></div>
<div class="vl" style="left:867.5px;top:124px;height:363px"></div>
</div></div>
<div id="more"></div>
<div class="t" style="left:977.20px;top:119.41px;font-size:7.9px;color:#333">More</div>
<svg class="ic" style="left:999.5px;top:119.5px" width="6" height="7" viewBox="0 0 6 7"><path d="M1 0.8L4.2 3.5L1 6.2" fill="none" stroke="#222" stroke-width="1.5"/></svg>
<div id="vs"></div><div id="vst"></div>
<div id="hsb"></div><div id="hst"></div>
<div id="sum"></div>
<div class="t" style="left:47.30px;top:510.33px;font-size:12.6px;font-weight:bold;color:#2e2a9c">Summary</div><div class="t" style="left:139.50px;top:512.95px;font-size:7.5px;transform:scaleY(1.12);transform-origin:0 6.35px;color:#8e9196;letter-spacing:-0.3px">INFLUENCERS</div><div class="t" style="left:195.20px;top:510.09px;font-size:12.3px;color:#2e2a9c;-webkit-text-stroke:0.3px #2e2a9c">294k</div><div class="t" style="left:249.00px;top:512.95px;font-size:7.5px;transform:scaleY(1.12);transform-origin:0 6.35px;color:#8e9196;letter-spacing:-0.3px">INSTAGRAM</div><div class="t" style="left:298.00px;top:510.09px;font-size:12.3px;color:#2e2a9c;-webkit-text-stroke:0.3px #2e2a9c">294k</div><div class="t" style="left:351.50px;top:512.95px;font-size:7.5px;transform:scaleY(1.12);transform-origin:0 6.35px;color:#8e9196;letter-spacing:-0.3px">YOUTUBE</div><div class="t" style="left:392.00px;top:510.09px;font-size:12.3px;color:#2e2a9c;-webkit-text-stroke:0.3px #2e2a9c">34k</div><div class="t" style="left:439.40px;top:512.95px;font-size:7.5px;transform:scaleY(1.12);transform-origin:0 6.35px;color:#8e9196;letter-spacing:-0.3px">FACEBOOK</div><div class="t" style="left:484.50px;top:510.09px;font-size:12.3px;color:#2e2a9c;-webkit-text-stroke:0.3px #2e2a9c">62k</div><div class="t" style="left:531.60px;top:512.95px;font-size:7.5px;transform:scaleY(1.12);transform-origin:0 6.35px;color:#8e9196;letter-spacing:-0.3px">TWITCH</div><div class="t" style="left:565.00px;top:510.09px;font-size:12.3px;color:#2e2a9c;-webkit-text-stroke:0.3px #2e2a9c">2.3k</div><div class="t" style="left:615.70px;top:512.95px;font-size:7.5px;transform:scaleY(1.12);transform-origin:0 6.35px;color:#8e9196;letter-spacing:-0.3px">TIKTOK</div><div class="t" style="left:647.00px;top:510.09px;font-size:12.3px;color:#2e2a9c;-webkit-text-stroke:0.3px #2e2a9c">3.4k</div><div class="t" style="left:698.00px;top:512.95px;font-size:7.5px;transform:scaleY(1.12);transform-origin:0 6.35px;color:#8e9196;letter-spacing:-0.3px">TWITTER</div><div class="t" style="left:734.80px;top:510.09px;font-size:12.3px;color:#2e2a9c;-webkit-text-stroke:0.3px #2e2a9c">96k</div><div class="t" style="left:781.70px;top:512.95px;font-size:7.5px;transform:scaleY(1.12);transform-origin:0 6.35px;color:#8e9196;letter-spacing:-0.3px">PINTEREST</div><div class="t" style="left:826.00px;top:510.09px;font-size:12.3px;color:#2e2a9c;-webkit-text-stroke:0.3px #2e2a9c">12k</div><div class="t" style="left:872.00px;top:512.95px;font-size:7.5px;transform:scaleY(1.12);transform-origin:0 6.35px;color:#8e9196;letter-spacing:-0.3px">BLOG</div><div class="t" style="left:898.90px;top:510.09px;font-size:12.3px;color:#2e2a9c;-webkit-text-stroke:0.3px #2e2a9c">123k</div>
</body></html>
